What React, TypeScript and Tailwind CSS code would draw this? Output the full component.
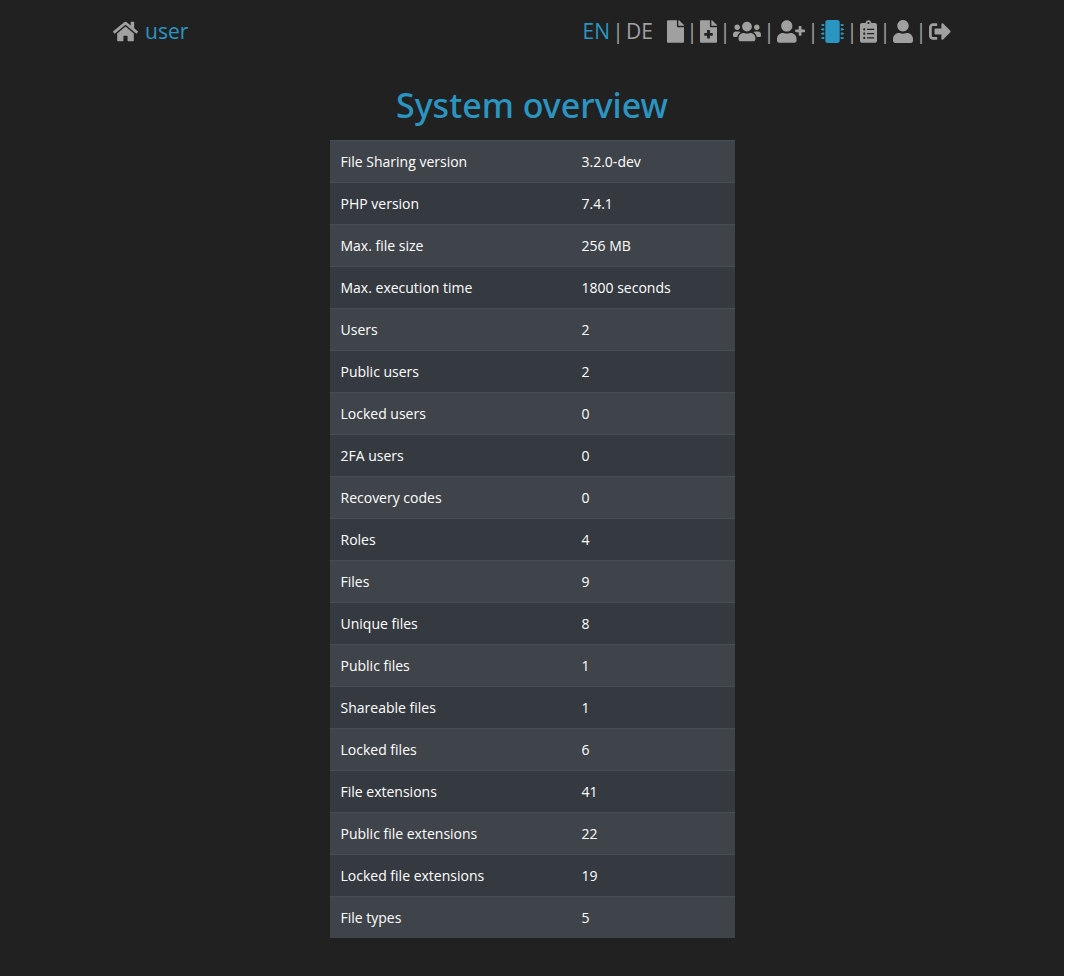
import { Fragment } from "react";
import type { IconType } from "react-icons";
import {
  FaClipboardList,
  FaFile,
  FaFileMedical,
  FaHome,
  FaMicrochip,
  FaSignOutAlt,
  FaUser,
  FaUserPlus,
  FaUsers,
} from "react-icons/fa";

type NavItem = { label: string; icon: IconType; size: string; active?: boolean };

const navItems: NavItem[] = [
  { label: "Files", icon: FaFile, size: "w-[17px]" },
  { label: "Add file", icon: FaFileMedical, size: "w-[17px]" },
  { label: "Users", icon: FaUsers, size: "w-[28px]" },
  { label: "Add user", icon: FaUserPlus, size: "w-[28px]" },
  { label: "System overview", icon: FaMicrochip, size: "w-[23px]", active: true },
  { label: "Logs", icon: FaClipboardList, size: "w-[17px]" },
  { label: "Account", icon: FaUser, size: "w-[20px]" },
  { label: "Sign out", icon: FaSignOutAlt, size: "w-[22px]" },
];

const rows: [string, string][] = [
  ["File Sharing version", "3.2.0-dev"],
  ["PHP version", "7.4.1"],
  ["Max. file size", "256 MB"],
  ["Max. execution time", "1800 seconds"],
  ["Users", "2"],
  ["Public users", "2"],
  ["Locked users", "0"],
  ["2FA users", "0"],
  ["Recovery codes", "0"],
  ["Roles", "4"],
  ["Files", "9"],
  ["Unique files", "8"],
  ["Public files", "1"],
  ["Shareable files", "1"],
  ["Locked files", "6"],
  ["File extensions", "41"],
  ["Public file extensions", "22"],
  ["Locked file extensions", "19"],
  ["File types", "5"],
];

function Bar() {
  return (
    <span aria-hidden="true" className="w-4 text-center">
      |
    </span>
  );
}

export default function App() {
  return (
    <div className="min-h-screen bg-white pr-[15px] font-['Open_Sans','Noto_Sans',sans-serif]">
      <div className="min-h-screen bg-[#212121] pb-9">
        <header className="mx-auto flex max-w-[838px] items-center justify-between pt-4 text-[21px] leading-[30px] text-[#a0a0a0]">
          <a href="#home" className="flex items-center gap-[7px]">
            <FaHome className="h-[23px] w-[25px]" />
            <span className="text-[#2b95c2]">user</span>
          </a>
          <nav className="flex items-center">
            <a href="#en" className="text-[#2b95c2]">EN</a>
            <Bar />
            <a href="#de" className="mr-[14px]">DE</a>
            {navItems.map(({ label, icon: Icon, size, active }, i) => (
              <Fragment key={label}>
                {i > 0 && <Bar />}
                <a href={"#" + label} aria-label={label} className={active ? "text-[#2b95c2]" : ""}>
                  <Icon className={"h-[23px] " + size} />
                </a>
              </Fragment>
            ))}
          </nav>
        </header>
        <main className="flex flex-col items-center pt-9">
          <h1 className="mb-3 font-['Noto_Sans',sans-serif] text-[34px] leading-[46px] font-medium text-[#2b95c2]">
            System overview
          </h1>
          <table className="w-[405px] border-separate border-spacing-0 text-sm text-white">
            <tbody>
              {rows.map(([name, value]) => (
                <tr key={name} className="h-[42px] bg-[#353a41] odd:bg-[#3f444a]">
                  <th scope="row" className="w-[241px] border-t border-[#454d55] px-[11px] text-left font-normal">{name}</th>
                  <td className="border-t border-[#454d55] px-[11px]">{value}</td>
                </tr>
              ))}
            </tbody>
          </table>
        </main>
      </div>
    </div>
  );
}
